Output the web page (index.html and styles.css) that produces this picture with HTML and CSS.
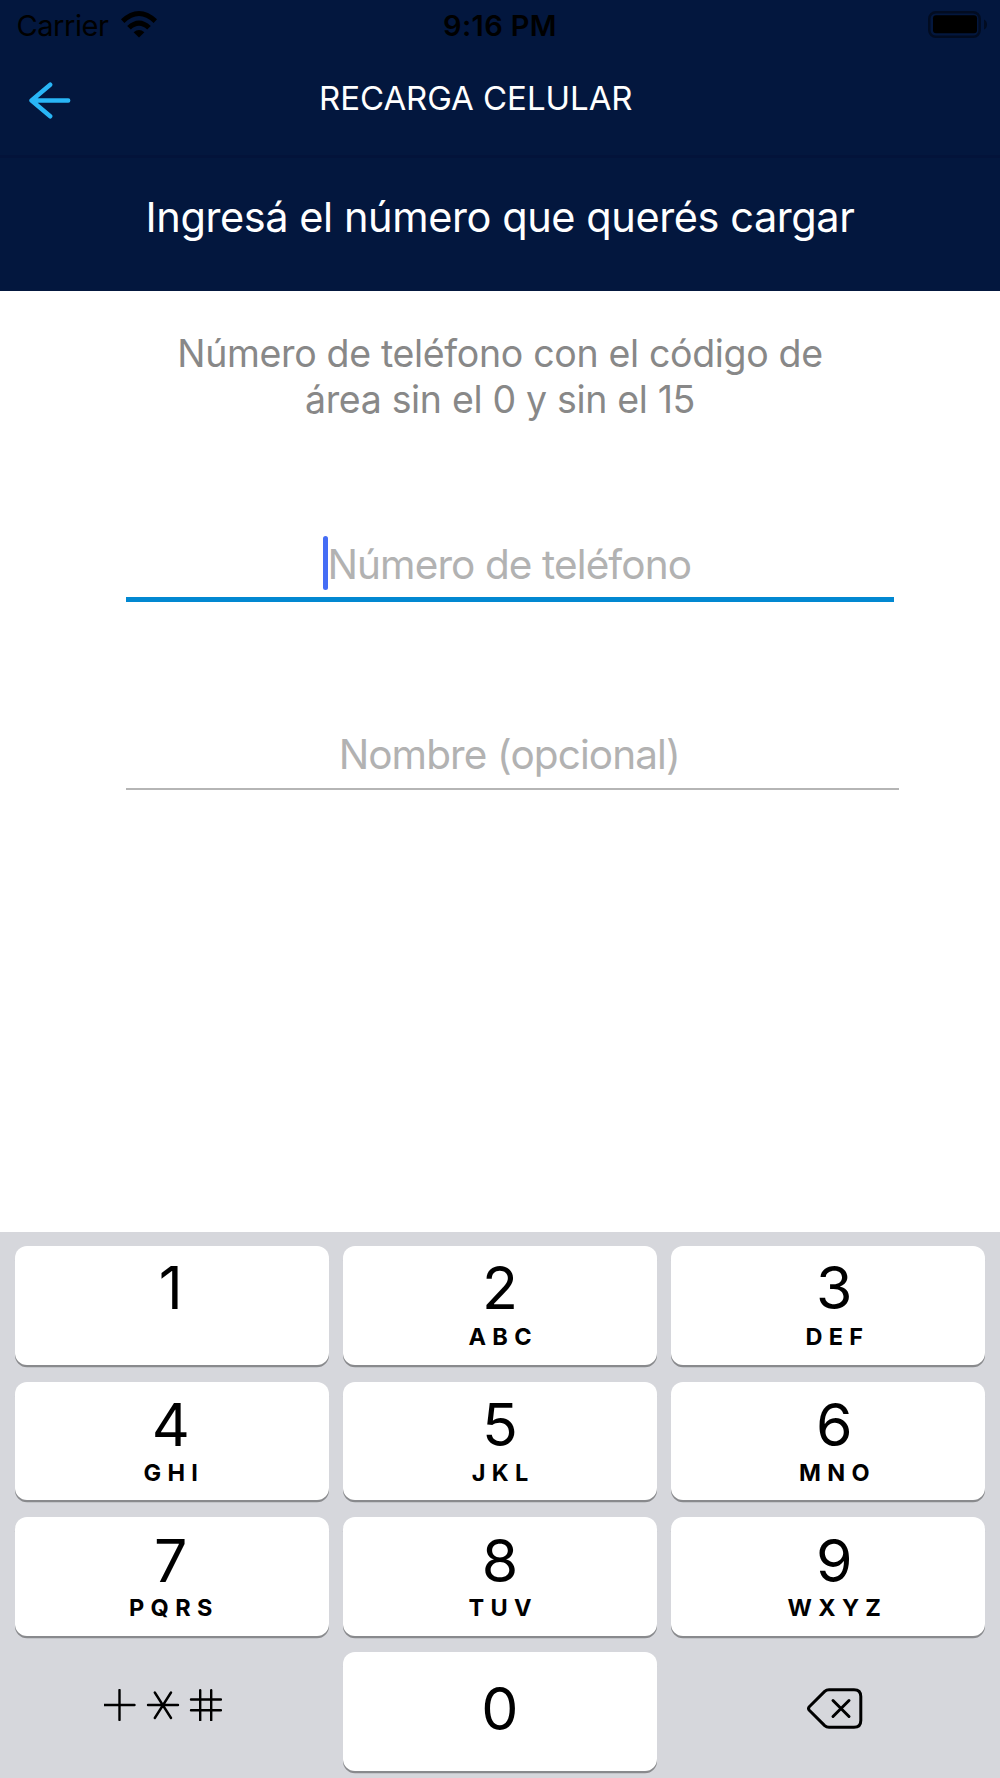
FILE: index.html
```html
<!DOCTYPE html>
<html lang="es">
<head>
<meta charset="utf-8">
<title>Recarga celular</title>
<link rel="stylesheet" href="styles.css">
</head>
<body>
<header class="header">
  <div class="status">
    <div class="status-left">
      <span class="carrier">Carrier</span>
      <svg class="wifi" width="36" height="27" viewBox="0 0 36 27">
        <path d="M0 8.3Q18-8.3 36 8.3L32.6 11.9Q18-1.9 3.4 11.9Z"/>
        <path d="M6.2 14.9Q18 3.9 29.8 14.9L26.2 18.4Q18 10.9 9.8 18.4Z"/>
        <path d="M12.6 21.2Q18 16.6 23.4 21.2L18 26.6Z"/>
      </svg>
    </div>
    <span class="time">9:16 PM</span>
    <svg class="battery" width="60" height="28" viewBox="0 0 60 28">
      <rect class="battery-case" x="1.3" y="1.3" width="50.4" height="24.4" rx="6.5"/>
      <rect x="5" y="4.3" width="44" height="17.9" rx="3"/>
      <path class="battery-tip" d="M56 8.5q3 1.5 3 5t-3 5z"/>
    </svg>
  </div>
  <nav class="nav">
    <svg class="back" width="42" height="37" viewBox="0 0 42 37">
      <path d="M39.2 18.5H3M21.2 2.7L2.5 18.5L21.2 34.3"/>
    </svg>
    <h1 class="title">RECARGA CELULAR</h1>
  </nav>
  <h2 class="heading">Ingresá el número que querés cargar</h2>
</header>
<main class="form">
  <p class="hint">Número de teléfono con el código de<br>área sin el 0 y sin el 15</p>
  <div class="field field-active"><span class="caret"></span><span class="phone">Número de teléfono</span></div>
  <div class="field field-name"><span class="name">Nombre (opcional)</span></div>
</main>
<section class="keyboard">
  <div class="key first left"><span class="digit">1</span></div>
  <div class="key first"><span class="digit">2</span><span class="letters">ABC</span></div>
  <div class="key first right"><span class="digit">3</span><span class="letters">DEF</span></div>
  <div class="key left"><span class="digit">4</span><span class="letters">GHI</span></div>
  <div class="key"><span class="digit">5</span><span class="letters">JKL</span></div>
  <div class="key right"><span class="digit">6</span><span class="letters">MNO</span></div>
  <div class="key left"><span class="digit">7</span><span class="letters">PQRS</span></div>
  <div class="key"><span class="digit">8</span><span class="letters">TUV</span></div>
  <div class="key right"><span class="digit">9</span><span class="letters">WXYZ</span></div>
  <div class="plain symbols">
    <svg width="118" height="32" viewBox="0 0 118 32">
      <path d="M.5 16H30.5M15.5 1V31M44 16H74M50.8 3.5L67 29M67 3.5L50.8 29M87 10.5H117M87 21.3H117M96.2 1.3V31.3M107.2 1.3V31.3"/>
    </svg>
  </div>
  <div class="key zero"><span class="digit">0</span></div>
  <div class="plain delete">
    <svg width="56" height="41" viewBox="0 0 56 41">
      <path d="M22 1.7H47Q53.8 1.7 53.8 8.5V32.5Q53.8 39.3 47 39.3H22Q19.5 39.3 17.7 37.6L2.3 22.3Q.8 20.5 2.3 18.7L17.7 3.4Q19.5 1.7 22 1.7Z"/>
      <path d="M26 12.5L42 28.5M42 12.5L26 28.5"/>
    </svg>
  </div>
</section>
</body>
</html>
```

FILE: styles.css
```css
* {
  box-sizing: border-box;
}

body {
  margin: 0;
  width: 1000px;
  height: 1778px;
  display: flex;
  flex-direction: column;
  overflow: hidden;
  background: #fff;
  font-family: Inter, "Liberation Sans", sans-serif;
}

h1, h2, p {
  margin: 0;
  font-weight: 400;
}

.header {
  height: 291px;
  background: #03173e;
  color: #fff;
}

.status {
  height: 50px;
  display: grid;
  grid-template-columns: 1fr auto 1fr;
  color: #000;
  line-height: 51px;
  font-size: 29px;
}

.status-left {
  display: flex;
  gap: 12.5px;
  padding-left: 16.5px;
}

.carrier {
  letter-spacing: -0.45px;
}

.wifi {
  margin-top: 10.5px;
}

.time {
  font-weight: 600;
  letter-spacing: 0.35px;
}

.battery {
  justify-self: end;
  margin: 11px 12px 0 0;
}

.battery-case {
  fill: none;
  stroke: #020c21;
  stroke-width: 2.5;
}

.battery-tip {
  fill: #020c21;
}

.nav {
  height: 108px;
  display: flex;
  align-items: flex-start;
  padding: 31.5px 0 0 28.5px;
  border-bottom: 3px solid #03133a;
}

.back {
  fill: none;
  stroke: #29b6f6;
  stroke-width: 4.4;
  stroke-linecap: round;
  stroke-linejoin: round;
}

.title {
  margin: -4.5px 0 0 248.5px;
  font-size: 33px;
  line-height: 42px;
  letter-spacing: -0.05px;
  white-space: nowrap;
}

.heading {
  padding-top: 34px;
  font-size: 41.5px;
  line-height: 50px;
  letter-spacing: -0.42px;
  text-align: center;
  white-space: nowrap;
}

.form {
  flex: 1;
  padding-left: 126px;
}

.hint {
  margin-left: -126px;
  padding-top: 40px;
  font-size: 37.5px;
  line-height: 46px;
  letter-spacing: -0.33px;
  text-align: center;
  color: #888;
  white-space: nowrap;
}

.field {
  display: flex;
  justify-content: center;
  line-height: 50px;
  font-size: 40.5px;
  letter-spacing: -0.9px;
  color: #b2b2b2;
  white-space: nowrap;
}

.field-active {
  width: 767.5px;
  height: 66px;
  margin-top: 113px;
  padding-right: 5px;
  border-bottom: 5px solid #0288d1;
}

.caret {
  width: 5px;
  height: 54px;
  margin-right: -1px;
  border-radius: 2.5px;
  background: #456df5;
}

.phone {
  margin-top: 3.5px;
}

.field-name {
  width: 772.5px;
  height: 60px;
  margin-top: 128px;
  padding-right: 6px;
  border-bottom: 2px solid #b5b5b5;
}

.keyboard {
  height: 546px;
  display: grid;
  grid-template-columns: repeat(3, 314px);
  grid-auto-rows: 118.5px;
  gap: 16.9px 14.3px;
  padding: 14.3px 0 0 14.7px;
  background: #d6d7dc;
}

.key {
  display: flex;
  flex-direction: column;
  align-items: center;
  padding: 13.8px 0 15.4px;
  border-radius: 12px;
  background: #fff;
  box-shadow: 0 2.3px 0 #898a8d;
}

.first {
  padding-top: 12px;
}

.left {
  padding-right: 2px;
}

.right {
  padding-left: 12px;
}

.digit {
  font-size: 59px;
  line-height: 60px;
}

.letters {
  margin-top: auto;
  font-size: 23.5px;
  font-weight: 650;
  line-height: 24px;
  letter-spacing: 6.3px;
  margin-right: -6.3px;
}

.zero {
  padding-top: 26.5px;
}

.plain svg {
  display: block;
  fill: none;
  stroke: #000;
  stroke-linecap: round;
}

.symbols {
  padding: 36.5px 0 0 89px;
}

.symbols svg {
  stroke-width: 2.4;
}

.delete {
  padding: 36px 0 0 135.5px;
}

.delete svg {
  stroke-width: 3;
  stroke-linejoin: round;
}
```
